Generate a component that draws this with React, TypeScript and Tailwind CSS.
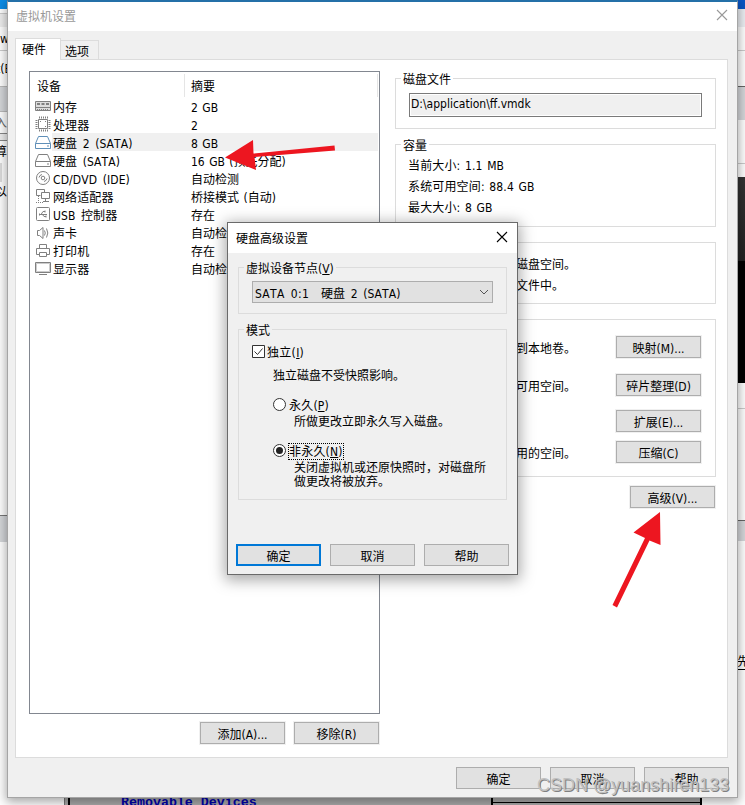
import type { ReactNode } from "react";
import { clsx } from "clsx";

interface Device {
  icon: ReactNode;
  name: string;
  summary: string;
  selected?: boolean;
}

const diskShape = (
  <>
    <path d="M3.5 3.5h9l3 7v5H.5v-5z" />
    <path d="M.5 10.500h15M12 13h2" />
  </>
);

const devices: Device[] = [
  {
    name: "内存",
    summary: "2 GB",
    icon: (
      <>
        <path d="M.5 4.500h15v9H.5z" fill="#ddd" />
        <path d="M2 7h3M6.500 7h3M11 7h3" strokeWidth="2" />
        <path d="M1 10.500h14" />
        <path d="M2 12.500h12" strokeDasharray="1 1" />
      </>
    ),
  },
  {
    name: "处理器",
    summary: "2",
    icon: (
      <>
        <path d="M3.500 4.500h9v9h-9z" />
        <path d="M4 2.500h9M4 15.500h9" strokeWidth="2" strokeDasharray="1 1" />
        <path d="M1.500 5v9M14.500 5v9" strokeWidth="2" strokeDasharray="1 1" />
        <path d="M5 6.500h1M10 6.500h1M10 11.500h1" />
      </>
    ),
  },
  { name: "硬盘 2 (SATA)", summary: "8 GB", selected: true, icon: diskShape },
  { name: "硬盘 (SATA)", summary: "16 GB (预先分配)", icon: diskShape },
  {
    name: "CD/DVD (IDE)",
    summary: "自动检测",
    icon: (
      <>
        <circle cx="8" cy="9" r="6.500" />
        <circle cx="8" cy="9" r="1.800" />
        <path d="M4 8.500A4 4 0 0 1 7 5.500M12 9.500A4 4 0 0 1 9 12.500" />
      </>
    ),
  },
  {
    name: "网络适配器",
    summary: "桥接模式 (自动)",
    icon: (
      <>
        <path d="M5.500 8.500h-4v-6h8v3M6.500 5.500h8v6h-8zM10.500 12v2.500M8 14.500h6" />
        <path d="M3.500 9v5M1 15.500h7" strokeDasharray="1 1" />
      </>
    ),
  },
  {
    name: "USB 控制器",
    summary: "存在",
    icon: (
      <>
        <rect x="1.500" y="2.500" width="13" height="13" rx="1" />
        <path d="M4 9.500h8M6 9.500l2-3h2M7.500 9.500l1.500 2h2M4.500 8.500v2M10 5.500v2M11 10.500v2" />
      </>
    ),
  },
  {
    name: "声卡",
    summary: "自动检测",
    icon: (
      <>
        <path d="M2.500 7.500h2l3.500-3v11l-3.500-3h-2z" />
        <path d="M9.500 7.500q1.500 2.500 0 5M11.500 5.500q2.600 4.500 0 9" />
      </>
    ),
  },
  {
    name: "打印机",
    summary: "存在",
    icon: <path d="M4.500 7.500v-4h7v4M4.500 13.500h-3v-6h13v6h-3M4.500 11.500h7v4h-7z" />,
  },
  {
    name: "显示器",
    summary: "自动检测",
    icon: (
      <>
        <path d="M.5 3.500h15v10H.5zM4 15.500h8" />
        <path d="M1.500 4.500h13v8h-13z" className="opacity-40" />
      </>
    ),
  },
];

function Button({ children, primary, className }: { children: ReactNode; primary?: boolean; className?: string }) {
  return (
    <button
      className={clsx(
        "flex h-[22px] w-[85px] shrink-0 items-center justify-center bg-[#e1e1e1] pt-[3px] whitespace-nowrap outline-1 outline-[#f0f0f0]",
        primary ? "border-2 border-[#0078d7]" : "border border-[#adadad]",
        className,
      )}
    >
      {children}
    </button>
  );
}

function Group({ title, dim, className, children }: { title: ReactNode; dim?: boolean; className?: string; children?: ReactNode }) {
  return (
    <section className={clsx("shrink-0 border border-[#dcdcdc]", className)}>
      <h3 className={clsx("-mt-[7px] -mb-[2px] ml-[5px] w-fit px-0.5 leading-[16px]", dim ? "bg-[#f0f0f0]" : "bg-white")}>{title}</h3>
      {children}
    </section>
  );
}

function Close({ className }: { className: string }) {
  return (
    <svg width="12" height="12" viewBox="0 0 12 12" stroke="currentColor" className={className}>
      <path d="M1 1l10 10M11 1L1 11" strokeWidth="1.100" />
    </svg>
  );
}

function Backdrop() {
  return (
    <div className="flex h-full justify-between">
      <div className="flex w-[7px] flex-col overflow-hidden whitespace-nowrap">
        <div className="h-[9px] shrink-0 bg-[#0b8ce6]" />
        <div className="h-[4px] shrink-0 bg-white" />
        <div className="h-[14px] shrink-0 border-t border-[#ccc] bg-[#eee]" />
        <div className="h-[24px] shrink-0 border-b border-[#ccc] leading-[24px]">w</div>
        <div className="flex h-[35px] shrink-0 items-center justify-start">
          <span className="-ml-[4px]">t(E</span>
        </div>
        <div className="h-[26px] shrink-0 border-y border-[#bbb] bg-[#d5d7da]" />
        <div className="flex h-[22px] shrink-0 items-center justify-end border-b border-[#888] text-[#666]">入</div>
        <div className="h-[7px] shrink-0 border-b border-[#888] bg-[#eee]" />
        <div className="flex h-[22px] shrink-0 items-center justify-end">算</div>
        <div className="h-[19px] w-[2px] shrink-0 bg-[#ddd]" />
        <div className="flex h-[20px] shrink-0 items-center justify-end">以</div>
        <div className="h-[313px] shrink-0" />
        <div className="h-[27px] shrink-0 border-t border-[#777] bg-[#d5d7da]" />
      </div>
      <div className="flex w-[7px] flex-col overflow-hidden">
        <div className="h-[9px] shrink-0 bg-[#0a56c4]" />
        <div className="h-[18px] shrink-0 bg-[#eceff3]" />
        <div className="h-[24px] shrink-0 border-b border-[#ccc]" />
        <div className="h-[36px] shrink-0 border-b border-[#666]" />
        <div className="h-[33px] shrink-0 bg-[#d5d7da]" />
        <div className="h-[44px] shrink-0 border-b border-[#ccc]" />
        <div className="h-[13px] shrink-0" />
        <div className="h-[84px] shrink-0 bg-gradient-to-b from-[#333] to-[#222]" />
        <div className="h-[122px] shrink-0 bg-black" />
        <div className="h-[26px] shrink-0 border-b border-[#ccc]" />
        <div className="h-[112px] shrink-0 border-b border-[#666]" />
        <div className="h-[20px] shrink-0 bg-[#d5d7da]" />
        <div className="h-[115px] shrink-0" />
        <div className="-ml-px h-[14px] w-3 shrink-0 border-b border-black leading-[13px]">先</div>
      </div>
    </div>
  );
}

function HardwareTab() {
  return (
    <div className="flex h-full pt-[11px] pl-[13px]">
      <div className="w-[351px]">
        <div className="h-[643px] border border-[#828790] px-px">
          <div className="flex h-[25px] pt-0.5">
            <div className="w-[154px] border-r border-[#e5e5e5] pl-[6px] leading-[27px]">设备</div>
            <div className="w-[193px] border-r border-[#e5e5e5] pl-[6px] leading-[27px]">摘要</div>
          </div>
          {devices.map((d) => (
            <div key={d.name} className="flex h-[18px] pl-[4px] leading-[22px] whitespace-nowrap">
              <svg
                width="17"
                height="18"
                viewBox="0 0 17 18"
                fill="none"
                stroke="currentColor"
                className={clsx("shrink-0", d.selected ? "text-[#5f8fb8]" : "text-[#808080]")}
              >
                {d.icon}
              </svg>
              <div className={clsx("flex flex-1", d.selected && "bg-[#f0f0f0]")}>
                <span className="w-[139px] pl-px tracking-[0.1px] [word-spacing:2px]">{d.name}</span>
                <span className="[word-spacing:1px]">{d.summary}</span>
              </div>
            </div>
          ))}
        </div>
        <div className="mt-[8px] flex justify-end gap-[9px] pr-px">
          <Button>添加(A)...</Button>
          <Button>移除(R)</Button>
        </div>
      </div>

      <div className="ml-[15px] flex w-[321px] flex-col pt-[7px]">
        <Group title="磁盘文件" className="h-[51px]">
          <div className="mt-[7px] ml-[13px] h-[24px] w-[293px] border border-[#7a7a7a] bg-[#f0f0f0] pl-px leading-[21px] shadow-[inset_0_0_0_1px_white]">
            D:\application\ff.vmdk
          </div>
        </Group>
        <Group title="容量" className="mt-[15px] h-[83px]">
          <div className="mt-[4px] pl-[12px] leading-[21px] tracking-[0.15px] [word-spacing:1px]">
            <p>当前大小: 1.1 MB</p>
            <p>系统可用空间: 88.4 GB</p>
            <p>最大大小: 8 GB</p>
          </div>
        </Group>
        <Group title="磁盘信息" className="mt-[15px] h-[62px]">
          <div className="mt-[5px] pl-[12px] leading-[21px]">
            <p>没有为此硬盘预分配磁盘空间。</p>
            <p>硬盘内容存储在单个文件中。</p>
          </div>
        </Group>
        <Group title="磁盘实用工具" className="mt-[15px] h-[158px]">
          <div className="flex flex-col pr-[14px] pl-[12px]">
            <div className="mt-[9px] flex items-center justify-between">
              <span className="pt-[3px]">将该虚拟机磁盘映射到本地卷。</span>
              <Button>映射(M)...</Button>
            </div>
            <div className="mt-[16px] flex items-center justify-between">
              <span className="pt-[3px]">整理文件碎片并整合可用空间。</span>
              <Button>碎片整理(D)</Button>
            </div>
            <div className="mt-[14px] flex items-center justify-between">
              <span className="pt-[3px]">扩展磁盘容量。</span>
              <Button>扩展(E)...</Button>
            </div>
            <div className="mt-[9px] flex items-center justify-between">
              <span className="pt-[3px]">压缩磁盘以回收未使用的空间。</span>
              <Button>压缩(C)</Button>
            </div>
          </div>
        </Group>
        <Button className="mt-[9px] mr-px self-end">高级(V)...</Button>
      </div>
    </div>
  );
}

function SettingsWindow() {
  return (
    <div className="absolute top-0 left-[7px] flex h-[798px] w-[731px] flex-col border border-t-2 border-[#a5a5a5] border-t-[#2470a8] bg-[#f0f0f0] shadow-[0_3px_10px_1px_rgba(0,0,0,0.35)]">
      <header className="flex h-[29px] shrink-0 items-center justify-between bg-white pr-[9px] pl-[8px] text-[#999]">
        虚拟机设置
        <Close className="mb-[3px] text-[#999]" />
      </header>
      <nav className="flex h-[28px] shrink-0 items-end pl-[7px]">
        <div className="z-10 -mb-px h-[22px] w-[46px] border border-b-0 border-[#dcdcdc] bg-white pl-[6px] leading-[23px]">硬件</div>
        <div className="h-[19px] w-[38px] border border-b-0 border-l-0 border-[#dcdcdc] pl-[4px] leading-[22px]">选项</div>
      </nav>
      <main className="ml-[7px] h-[699px] w-[713px] shrink-0 border border-[#dcdcdc] bg-white">
        <HardwareTab />
      </main>
      <footer className="flex justify-end gap-[9px] pt-[9px] pr-[8px]">
        <Button>确定</Button>
        <Button>取消</Button>
        <Button>帮助</Button>
      </footer>
    </div>
  );
}

function Radio({ checked }: { checked?: boolean }) {
  return (
    <span className="mb-[3px] flex size-[13px] shrink-0 items-center justify-center rounded-full border border-[#333] bg-white">
      {checked && <span className="size-[7px] rounded-full bg-[#222]" />}
    </span>
  );
}

function AdvancedDialog() {
  return (
    <div className="absolute top-[222px] left-[227px] flex h-[353px] w-[291px] flex-col border border-[#6a6a6a] bg-[#f0f0f0] shadow-[0_3px_14px_2px_rgba(0,0,0,0.35)]">
      <header className="flex h-[30px] shrink-0 items-center justify-between bg-white pr-[9px] pl-[8px]">
        <span className="pt-0.5">硬盘高级设置</span>
        <Close className="mb-0.5 text-black" />
      </header>
      <div className="flex flex-1 flex-col px-[10px] pt-[14px]">
        <Group dim title={<>虚拟设备节点(<u>V</u>)</>} className="h-[47px]">
          <div className="mt-[6px] ml-[13px] flex h-[22px] w-[241px] items-center border border-[#adadad] bg-[#e1e1e1] pt-[3px] pr-[3px] pl-[2px]">
            <span className="w-[66px] tracking-[0.4px] [word-spacing:2px]">SATA 0:1</span>
            <span className="flex-1 tracking-[0.1px] [word-spacing:2px]">硬盘 2 (SATA)</span>
            <svg width="10" height="6" viewBox="0 0 10 6" fill="none" stroke="#555" className="mb-[3px]">
              <path d="M1 1l4 4 4-4" />
            </svg>
          </div>
        </Group>
        <Group dim title="模式" className="mt-[15px] h-[171px]">
          <div className="mt-[7px] ml-[13px] flex h-[16px] items-center gap-[2px]">
            <svg width="13" height="13" viewBox="0 0 13 13" fill="white" stroke="#333" className="mb-[2px]">
              <path d="M.5.500h12v12H.5z" />
              <path d="M2.500 6.500l3 3 5-6" fill="none" />
            </svg>
            <span className="pt-0.5 tracking-[0.3px]">独立(<u>I</u>)</span>
          </div>
          <p className="mt-[8px] ml-[34px] leading-[16px]">独立磁盘不受快照影响。</p>
          <div className="mt-[14px] ml-[34px] flex h-[16px] items-center gap-[3px]">
            <Radio />
            <span className="tracking-[0.2px]">永久(<u>P</u>)</span>
          </div>
          <p className="ml-[55px] leading-[16px]">所做更改立即永久写入磁盘。</p>
          <div className="mt-[14px] ml-[34px] flex h-[16px] items-center gap-[2px]">
            <Radio checked />
            <span className="mb-0.5 flex h-[17px] items-center border border-dotted border-black pt-0.5 tracking-[0.200px]">
              非永久(<u>N</u>)
            </span>
          </div>
          <p className="mt-px ml-[55px] leading-[14px]">
            关闭虚拟机或还原快照时，对磁盘所
            <br />
            做更改将被放弃。
          </p>
        </Group>
      </div>
      <footer className="flex justify-end gap-[9px] pr-[8px] pb-[8px]">
        <Button primary>确定</Button>
        <Button>取消</Button>
        <Button>帮助</Button>
      </footer>
    </div>
  );
}

export default function App() {
  return (
    <div className="relative h-[805px] w-[745px] overflow-hidden bg-white font-['DejaVu_Sans_Condensed','Noto_Sans_CJK_SC',sans-serif] text-[12px] leading-[14px] text-black [font-kerning:none]">
      <Backdrop />
      {/* boot console peeking out under the window */}
      <div className="absolute top-[790px] left-[64px] h-[15px] w-[638px] border-l border-[#777] bg-[#aaa]">
        <div className="ml-[3px] flex h-full justify-between border-l-2 border-black">
          <span className="pt-[6px] pl-[51px] font-['Liberation_Mono',monospace] text-[13.300px] leading-[14px] font-bold text-[#0000aa]">Removable Devices</span>
          <div className="w-[211px] border-x-2 border-black">
            <div className="h-[13px] border-b border-black" />
          </div>
        </div>
      </div>
      <SettingsWindow />
      <AdvancedDialog />
      {/* annotation arrows */}
      <svg width="745" height="805" className="absolute inset-0" fill="#ed1620">
        <path d="M225 157.500L253 140l.500 13.500L334.500 145.500l.500 5L254.500 157l1.500 13z" />
        <path d="M660 512l.5 33-11-4.500L617 607.500l-4.500-2.500L645 538l-11.500-5.500z" />
      </svg>
      <div className="absolute top-[774px] left-[537px] font-['Liberation_Sans',sans-serif] text-[18px] leading-[22px] whitespace-nowrap text-[#c0c0c0] [text-shadow:1px_1px_0_#808080]">
        CSDN @yuanshiren133
      </div>
    </div>
  );
}
